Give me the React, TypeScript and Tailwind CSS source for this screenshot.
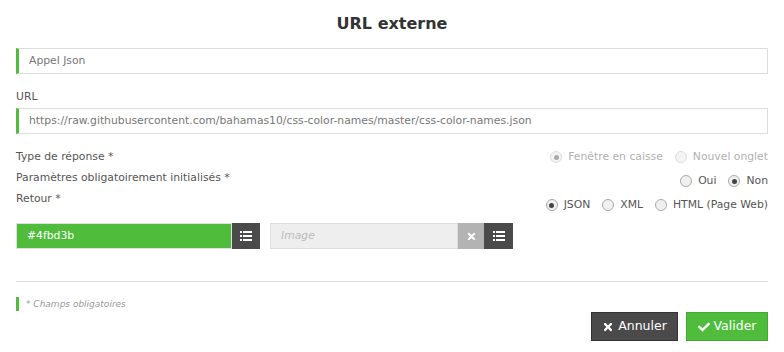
import React from 'react';
import {FaTimes, FaCheck} from 'react-icons/fa';

function Radio({checked, disabled, label}: {checked?: boolean; disabled?: boolean; label: string}) {
  return (
    <label className={`flex items-center gap-[6px] h-[14px] ${disabled ? 'text-[#b0b0b0]' : 'text-[#555]'}`}>
      <span
        className={`w-[12px] h-[12px] rounded-full border flex items-center justify-center ${
          disabled ? 'border-[#ddd] bg-[#f4f4f4]' : 'border-[#aaa] bg-[#f0f0f0]'
        }`}
      >
        {checked && <span className={`w-[5px] h-[5px] rounded-full ${disabled ? 'bg-[#aaa]' : 'bg-[#444]'}`} />}
      </span>
      {label}
    </label>
  );
}

function ListIcon() {
  return (
    <svg width="12" height="10" viewBox="0 0 12 10" fill="#fff">
      <rect x="0" y="0" width="2" height="2" />
      <rect x="3" y="0" width="9" height="2" />
      <rect x="0" y="4" width="2" height="2" />
      <rect x="3" y="4" width="9" height="2" />
      <rect x="0" y="8" width="2" height="2" />
      <rect x="3" y="8" width="9" height="2" />
    </svg>
  );
}

export default function App() {
  return (
    <div className="w-[784px] h-[352px] bg-white px-4 font-['DejaVu_Sans',sans-serif] text-[10.8px] text-[#555]">
      <h1 className="pt-[12px] h-[48px] text-center text-[16px] font-bold text-[#333]">URL externe</h1>

      <div className="h-[26px] border border-[#ddd] border-l-[3px] border-l-[#4fbd3b] flex items-center pl-[10px] text-[#777]">
        Appel Json
      </div>

      <div className="mt-[16px] h-[18px] leading-[14px]">URL</div>
      <div className="h-[26px] border border-[#ddd] border-l-[3px] border-l-[#4fbd3b] flex items-center pl-[10px] text-[#777]">
        https://raw.githubusercontent.com/bahamas10/css-color-names/master/css-color-names.json
      </div>

      <div className="mt-[16px] flex justify-between">
        <div className="flex flex-col gap-[7px] leading-[14px]">
          <div>Type de réponse *</div>
          <div>Paramètres obligatoirement initialisés *</div>
          <div>Retour *</div>
        </div>
        <div className="flex flex-col items-end gap-[10px]">
          <div className="flex gap-[12px]">
            <Radio checked disabled label="Fenêtre en caisse" />
            <Radio disabled label="Nouvel onglet" />
          </div>
          <div className="flex gap-[12px]">
            <Radio label="Oui" />
            <Radio checked label="Non" />
          </div>
          <div className="flex gap-[12px]">
            <Radio checked label="JSON" />
            <Radio label="XML" />
            <Radio label="HTML (Page Web)" />
          </div>
        </div>
      </div>

      <div className="mt-[11px] flex gap-[10px]">
        <div className="flex h-[26px]">
          <div className="w-[216px] bg-[#4fbd3b] text-white flex items-center pl-[10px] border border-[#e0e0e0]">
            #4fbd3b
          </div>
          <div className="w-[28px] bg-[#4a4a4a] flex items-center justify-center">
            <ListIcon />
          </div>
        </div>
        <div className="flex h-[26px]">
          <div className="w-[188px] bg-[#eee] border border-[#ddd] text-[#bbb] italic flex items-center pl-[10px]">
            Image
          </div>
          <div className="w-[26px] bg-[#b3b3b3] flex items-center justify-center text-white">
            <FaTimes size={11} />
          </div>
          <div className="w-[29px] bg-[#4a4a4a] flex items-center justify-center">
            <ListIcon />
          </div>
        </div>
      </div>

      <div className="mt-[32px] border-t border-[#e0e0e0]" />

      <div className="mt-[15px] flex items-start justify-between">
        <div className="flex items-center h-[14px] border-l-[3px] border-l-[#4fbd3b] pl-[7px] pt-[2px] text-[9px] italic text-[#999]">
          * Champs obligatoires
        </div>
        <div className="flex gap-[8px] mt-[15px]">
          <button className="h-[29px] w-[87px] bg-[#4a4a4a] border border-[#333] text-white text-[12.5px] flex items-center justify-center gap-[4px]">
            <FaTimes size={12} /> Annuler
          </button>
          <button className="h-[29px] w-[82px] bg-[#4fbd3b] border border-[#45a833] text-white text-[12.5px] flex items-center justify-center gap-[4px]">
            <FaCheck size={12} /> Valider
          </button>
        </div>
      </div>
    </div>
  );
}
